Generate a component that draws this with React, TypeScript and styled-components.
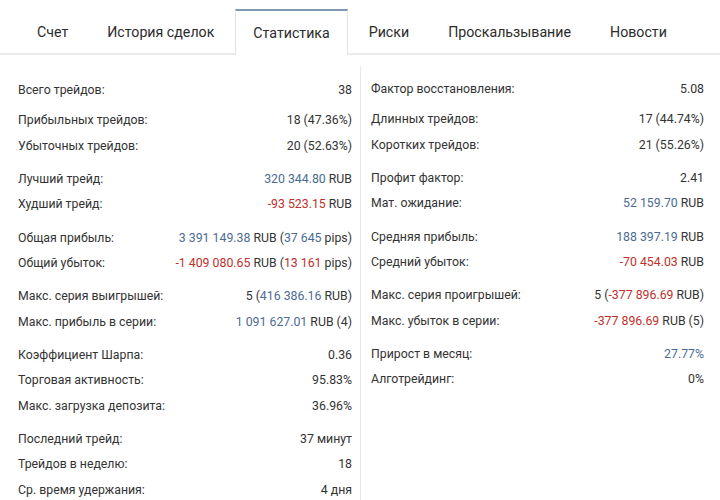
import React from 'react';
import styled, { createGlobalStyle } from 'styled-components';

const GlobalStyle = createGlobalStyle`
  html, body {
    margin: 0;
    padding: 0;
    background: #fff;
  }
  body {
    font-family: Roboto, "Noto Sans", Arial, sans-serif;
    color: #333;
  }
`;

type Tone = 'plain' | 'profit' | 'loss';

// a value is a list of pieces, each piece can be coloured on its own
type Piece = string | [string, Tone];

interface Stat {
  label: string;
  value: Piece[];
}

const tabs = ['Счет', 'История сделок', 'Статистика', 'Риски', 'Проскальзывание', 'Новости'];

const leftGroups: Stat[][] = [
  [{ label: 'Всего трейдов:', value: ['38'] }],
  [
    { label: 'Прибыльных трейдов:', value: ['18 (47.36%)'] },
    { label: 'Убыточных трейдов:', value: ['20 (52.63%)'] },
  ],
  [
    { label: 'Лучший трейд:', value: [['320 344.80', 'profit'], ' RUB'] },
    { label: 'Худший трейд:', value: [['-93 523.15', 'loss'], ' RUB'] },
  ],
  [
    {
      label: 'Общая прибыль:',
      value: [['3 391 149.38', 'profit'], ' RUB (', ['37 645', 'profit'], ' pips)'],
    },
    {
      label: 'Общий убыток:',
      value: [['-1 409 080.65', 'loss'], ' RUB (', ['13 161', 'loss'], ' pips)'],
    },
  ],
  [
    { label: 'Макс. серия выигрышей:', value: ['5 (', ['416 386.16', 'profit'], ' RUB)'] },
    { label: 'Макс. прибыль в серии:', value: [['1 091 627.01', 'profit'], ' RUB (4)'] },
  ],
  [
    { label: 'Коэффициент Шарпа:', value: ['0.36'] },
    { label: 'Торговая активность:', value: ['95.83%'] },
    { label: 'Макс. загрузка депозита:', value: ['36.96%'] },
  ],
  [
    { label: 'Последний трейд:', value: ['37 минут'] },
    { label: 'Трейдов в неделю:', value: ['18'] },
    { label: 'Ср. время удержания:', value: ['4 дня'] },
  ],
];

const rightGroups: Stat[][] = [
  [{ label: 'Фактор восстановления:', value: ['5.08'] }],
  [
    { label: 'Длинных трейдов:', value: ['17 (44.74%)'] },
    { label: 'Коротких трейдов:', value: ['21 (55.26%)'] },
  ],
  [
    { label: 'Профит фактор:', value: ['2.41'] },
    { label: 'Мат. ожидание:', value: [['52 159.70', 'profit'], ' RUB'] },
  ],
  [
    { label: 'Средняя прибыль:', value: [['188 397.19', 'profit'], ' RUB'] },
    { label: 'Средний убыток:', value: [['-70 454.03', 'loss'], ' RUB'] },
  ],
  [
    { label: 'Макс. серия проигрышей:', value: ['5 (', ['-377 896.69', 'loss'], ' RUB)'] },
    { label: 'Макс. убыток в серии:', value: [['-377 896.69', 'loss'], ' RUB (5)'] },
  ],
  [
    { label: 'Прирост в месяц:', value: [['27.77%', 'profit']] },
    { label: 'Алготрейдинг:', value: ['0%'] },
  ],
];

const Page = styled.div`
  width: 720px;
  height: 500px;
  overflow: hidden;
  background: #fff;
`;

const TabBar = styled.div`
  display: flex;
  gap: 3px;
  padding: 9px 0 0 19px;
  border-bottom: 2px solid #ebebeb;
  height: 44px;
`;

const Tab = styled.div<{ $active?: boolean }>`
  display: flex;
  align-items: center;
  padding: 2px 18px 0;
  font-size: 14.2px;
  color: #2b2b2b;
  white-space: nowrap;
  box-sizing: border-box;
  ${(p) =>
    p.$active &&
    `
    background: #fff;
    border-top: 2px solid #8098b3;
    border-left: 1px solid #e3e3e3;
    border-right: 1px solid #e3e3e3;
    padding: 0 17px;
    margin-bottom: -2px;
    height: 46px;
  `}
`;

const Columns = styled.div`
  display: grid;
  grid-template-columns: 360px 360px;
  height: 446px;
`;

const Column = styled.div<{ $side: 'left' | 'right' }>`
  display: flex;
  flex-direction: column;
  gap: 7.6px;
  padding: ${(p) => (p.$side === 'left' ? '22px 8px 0 18px' : '10px 16px 0 10px')};
  margin-top: ${(p) => (p.$side === 'right' ? '11px' : '0')};
  border-left: ${(p) => (p.$side === 'right' ? '1px solid #e8e8e8' : 'none')};
`;

const Group = styled.div<{ $lead?: boolean }>`
  display: flex;
  flex-direction: column;
  margin-bottom: ${(p) => (p.$lead ? '-2.5px' : '0')};
`;

const Row = styled.div`
  display: flex;
  justify-content: space-between;
  align-items: center;
  height: 25.5px;
  font-size: 12.3px;
  color: #333;
`;

const Label = styled.span`
  color: #333;
`;

const Value = styled.span`
  white-space: nowrap;
`;

const Part = styled.span<{ $tone: Tone }>`
  color: ${(p) => (p.$tone === 'profit' ? '#4b6c93' : p.$tone === 'loss' ? '#c0302c' : '#333')};
`;

const StatColumn: React.FC<{ groups: Stat[][]; side: 'left' | 'right' }> = ({ groups, side }) => (
  <Column $side={side}>
    {groups.map((group, gi) => (
      <Group key={gi} $lead={gi === 0}>
        {group.map((stat) => (
          <Row key={stat.label}>
            <Label>{stat.label}</Label>
            <Value>
              {stat.value.map((piece, i) =>
                typeof piece === 'string' ? (
                  <Part key={i} $tone="plain">{piece}</Part>
                ) : (
                  <Part key={i} $tone={piece[1]}>{piece[0]}</Part>
                )
              )}
            </Value>
          </Row>
        ))}
      </Group>
    ))}
  </Column>
);

const App: React.FC = () => (
  <Page>
    <GlobalStyle />
    <TabBar>
      {tabs.map((t) => (
        <Tab key={t} $active={t === 'Статистика'}>
          {t}
        </Tab>
      ))}
    </TabBar>
    <Columns>
      <StatColumn groups={leftGroups} side="left" />
      <StatColumn groups={rightGroups} side="right" />
    </Columns>
  </Page>
);

export default App;
